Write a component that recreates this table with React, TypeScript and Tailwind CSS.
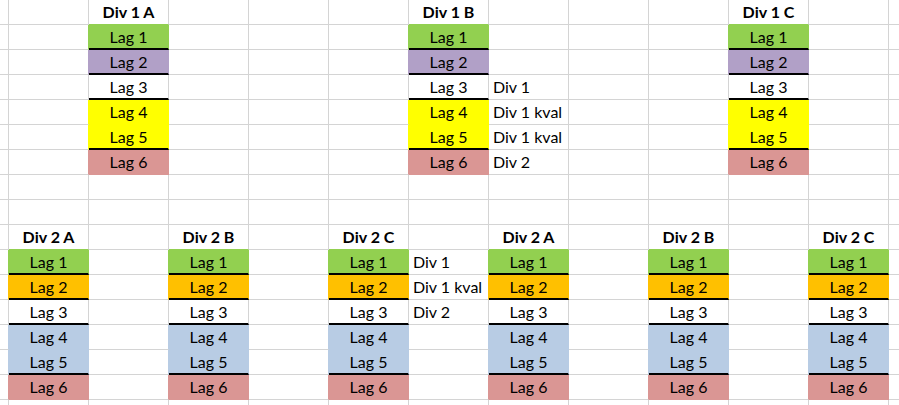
import React from "react";

type Fill = "green" | "purple" | "yellow" | "pink" | "orange" | "blue";

type Cell = {
  text?: string;
  bold?: boolean;
  fill?: Fill;
  thick?: boolean;
  label?: boolean;
};

const bgClass: Record<Fill, string> = {
  green: "bg-[#92d050]",
  purple: "bg-[#b1a0c7]",
  yellow: "bg-[#ffff00]",
  pink: "bg-[#da9694]",
  orange: "bg-[#ffc000]",
  blue: "bg-[#b8cce4]",
};

const rightClass: Record<Fill | "grid", string> = {
  green: "border-r-[#92d050]",
  purple: "border-r-[#b1a0c7]",
  yellow: "border-r-[#ffff00]",
  pink: "border-r-[#da9694]",
  orange: "border-r-[#ffc000]",
  blue: "border-r-[#b8cce4]",
  grid: "border-r-[#d4d4d4]",
};

const bottomClass: Record<Fill | "grid", string> = {
  green: "border-b-[#92d050]",
  purple: "border-b-[#b1a0c7]",
  yellow: "border-b-[#ffff00]",
  pink: "border-b-[#da9694]",
  orange: "border-b-[#ffc000]",
  blue: "border-b-[#b8cce4]",
  grid: "border-b-[#d4d4d4]",
};

const COLS = 13;
const ROWS = 17;

const div1Fills: (Fill | undefined)[] = ["green", "purple", undefined, "yellow", "yellow", "pink"];
const div2Fills: (Fill | undefined)[] = ["green", "orange", undefined, "blue", "blue", "pink"];
const thickAfter = [true, true, true, false, true, false];

const buildSheet = () => {
  const sheet: Cell[][] = Array.from({ length: ROWS }, () =>
    Array.from({ length: COLS }, () => ({}) as Cell)
  );

  const table = (name: string, col: number, row: number, fills: (Fill | undefined)[]) => {
    sheet[row][col] = { text: name, bold: true };
    fills.forEach((fill, i) => {
      sheet[row + 1 + i][col] = { text: `Lag ${i + 1}`, fill, thick: thickAfter[i] };
    });
  };

  table("Div 1 A", 2, 0, div1Fills);
  table("Div 1 B", 6, 0, div1Fills);
  table("Div 1 C", 10, 0, div1Fills);

  ["A", "B", "C", "A", "B", "C"].forEach((letter, i) => {
    table(`Div 2 ${letter}`, 1 + i * 2, 9, div2Fills);
  });

  ["Div 1", "Div 1 kval", "Div 1 kval", "Div 2"].forEach((text, i) => {
    sheet[3 + i][7] = { text, label: true };
  });
  ["Div 1", "Div 1 kval", "Div 2"].forEach((text, i) => {
    sheet[10 + i][6] = { text, label: true };
  });

  return sheet;
};

const sheet = buildSheet();

const App = () => {
  return (
    <div className="w-[899px] h-[405px] overflow-hidden bg-white font-['Lato',sans-serif] text-[16px] text-black">
      <div className="grid grid-cols-[9px_repeat(12,80px)] grid-rows-[25px_repeat(16,25px)]">
        {sheet.map((row, r) =>
          row.map((cell, c) => {
            const right = row[c + 1];
            const below = sheet[r + 1]?.[c];
            const rColor = right?.fill ?? cell.fill ?? "grid";
            const bColor = below?.fill ?? cell.fill ?? "grid";
            return (
              <div
                key={`${r}-${c}`}
                className={[
                  "box-border flex items-center overflow-visible whitespace-nowrap border-r",
                  rightClass[rColor],
                  cell.thick ? "border-b-2 border-b-black" : `border-b ${bottomClass[bColor]}`,
                  cell.fill ? bgClass[cell.fill] : "",
                  cell.label ? "justify-start pl-[4px]" : "justify-center",
                  cell.bold ? "font-bold" : "",
                ].join(" ")}
              >
                {cell.text && <span className="leading-none">{cell.text}</span>}
              </div>
            );
          })
        )}
      </div>
    </div>
  );
};

export default App;
